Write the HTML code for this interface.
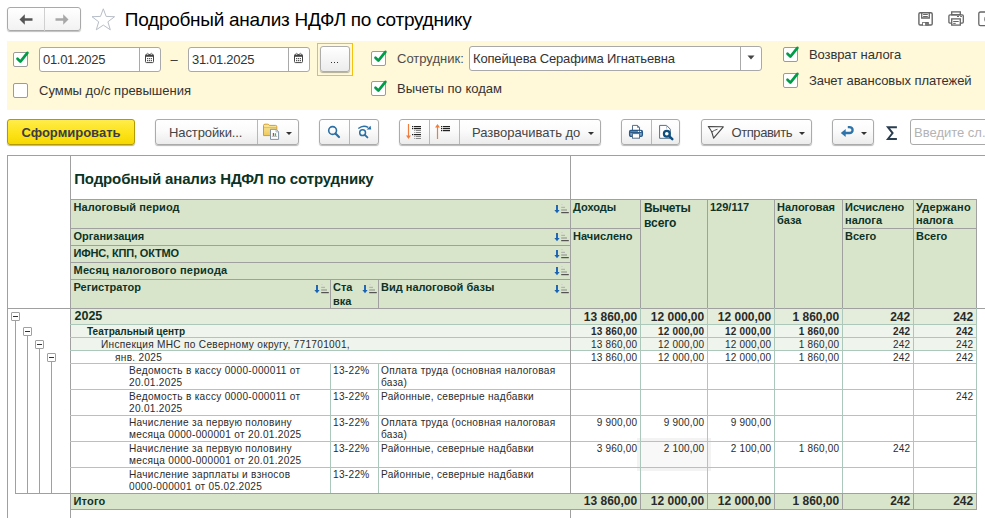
<!DOCTYPE html>
<html><head><meta charset="utf-8"><style>
html,body{margin:0;padding:0;width:985px;height:518px;overflow:hidden;background:#fff;position:relative}
body>div,body>span,body>svg{position:absolute}
.t{white-space:nowrap;font-family:"Liberation Sans",sans-serif}
</style></head><body>
<div style="left:7px;top:7px;width:74px;height:24px;border:1px solid #a9a9a9;border-radius:3px;background:linear-gradient(#fff,#f2f2f2);box-shadow:0 1px 1px rgba(0,0,0,.25);box-sizing:border-box"></div>
<div style="left:44px;top:8px;width:1px;height:23px;background:#d0d0d0"></div>
<svg style="left:18px;top:12px" width="16" height="14" viewBox="0 0 16 14"><path d="M1.5 7.5 L6.8 2.2 L6.8 6.2 L14.5 6.2 L14.5 8.8 L6.8 8.8 L6.8 12.8 Z" fill="#555"/></svg>
<svg style="left:54px;top:12px" width="16" height="14" viewBox="0 0 16 14"><path d="M14.5 7.5 L9.2 2.2 L9.2 6.2 L1.5 6.2 L1.5 8.8 L9.2 8.8 L9.2 12.8 Z" fill="#a8a8a8"/></svg>
<svg style="left:91px;top:8px" width="25" height="23" viewBox="0 0 25 23"><path d="M12.3 0.8 L15.1 8.4 L23.6 8.7 L16.9 13.8 L19.3 21.8 L12.3 17.1 L5.3 21.8 L7.7 13.8 L1 8.7 L9.5 8.4 Z" fill="none" stroke="#b8bec6" stroke-width="1"/></svg>
<span class="t" style="left:124.8px;top:9.92px;font-size:19px;line-height:19px;font-weight:400;color:#000;letter-spacing:-0.27px;">Подробный анализ НДФЛ по сотруднику</span>
<svg style="left:917px;top:11px" width="17" height="16" viewBox="0 0 17 16"><path d="M3.2 1.7 H13.9 Q15.2 1.7 15.2 3 V12.7 Q15.2 14 13.9 14 H3.2 Q1.9 14 1.9 12.7 V3 Q1.9 1.7 3.2 1.7 Z" fill="none" stroke="#666" stroke-width="1.4"/><path d="M4.7 1.7 V7 H12.3 V1.7" fill="none" stroke="#666" stroke-width="1.3"/><rect x="6.1" y="3" width="4.7" height="1" fill="#666"/><rect x="6.1" y="5" width="4.7" height="1" fill="#666"/><rect x="5.2" y="11" width="6.6" height="3.4" fill="#666"/><rect x="6" y="11.8" width="2.3" height="2.6" fill="#fff"/><rect x="8.3" y="11.8" width="3.2" height="2.6" fill="#777"/></svg>
<svg style="left:947px;top:10px" width="18" height="17" viewBox="0 0 18 17"><rect x="4.7" y="1.9" width="8.6" height="2.9" fill="none" stroke="#666" stroke-width="1.3"/><path d="M4.5 13.1 H3 Q1.9 13.1 1.9 12 V6 Q1.9 4.8 3.1 4.8 H15.2 Q16.3 4.8 16.3 6 V12 Q16.3 13.1 15.2 13.1 H13.5" fill="none" stroke="#666" stroke-width="1.3"/><rect x="4.7" y="8.9" width="8.6" height="6.2" fill="#fff" stroke="#666" stroke-width="1.3"/><rect x="6.2" y="11" width="5.5" height="1" fill="#666"/><rect x="6.2" y="12.9" width="2.5" height="1" fill="#666"/><rect x="10" y="6" width="2" height="1" fill="#666"/><rect x="13.2" y="6" width="1.7" height="1" fill="#666"/></svg>
<svg style="left:977px;top:11px" width="10" height="16" viewBox="0 0 10 16"><path d="M12 1 H3.5 Q1.8 1 1.8 2.7 V13 Q1.8 14.6 3.5 14.6 H12" fill="none" stroke="#666" stroke-width="1.3"/><ellipse cx="8.6" cy="8.2" rx="1.4" ry="2.6" fill="#777"/></svg>
<div style="left:7px;top:41px;width:978px;height:69px;background:#fff8d9"></div>
<div style="left:13px;top:52px;width:15px;height:15px;border:1px solid #9b9b9b;border-radius:2px;background:#fff;box-sizing:border-box"></div>
<svg style="left:13px;top:46px" width="18" height="22" viewBox="0 0 18 22"><path d="M4.5 12.7 L7.4 15.6 L14.4 6.9" fill="none" stroke="#009c48" stroke-width="2.7" stroke-linecap="round" stroke-linejoin="round"/></svg>
<div style="left:39px;top:47px;width:122px;height:25px;border:1px solid #a9a9a9;border-radius:3px;background:#fff;box-sizing:border-box"></div>
<div style="left:139px;top:48px;width:1px;height:23px;background:#a9a9a9"></div>
<svg style="left:144px;top:52px" width="12" height="12" viewBox="0 0 12 12"><rect x="1.5" y="2.6" width="8" height="8" rx="1" fill="#fff" stroke="#444" stroke-width="1"/><rect x="1.5" y="2.6" width="8" height="2.2" fill="#444"/><g fill="#fff" stroke="#444" stroke-width="0.6"><circle cx="3.6" cy="2.2" r="0.9"/><circle cx="7.4" cy="2.2" r="0.9"/></g><g fill="#555"><rect x="3" y="6" width="1.2" height="1.2"/><rect x="4.9" y="6" width="1.2" height="1.2"/><rect x="6.8" y="6" width="1.2" height="1.2"/><rect x="3" y="8" width="1.2" height="1.2"/><rect x="4.9" y="8" width="1.2" height="1.2"/><rect x="6.8" y="8" width="1.2" height="1.2"/></g></svg>
<span class="t" style="left:43px;top:52.60px;font-size:13px;line-height:13px;font-weight:400;color:#333;letter-spacing:-0.3px;">01.01.2025</span>
<span class="t" style="left:170.5px;top:52.50px;font-size:13px;line-height:13px;font-weight:400;color:#333;letter-spacing:0px;">–</span>
<div style="left:188px;top:47px;width:122px;height:25px;border:1px solid #a9a9a9;border-radius:3px;background:#fff;box-sizing:border-box"></div>
<div style="left:288px;top:48px;width:1px;height:23px;background:#a9a9a9"></div>
<svg style="left:293px;top:52px" width="12" height="12" viewBox="0 0 12 12"><rect x="1.5" y="2.6" width="8" height="8" rx="1" fill="#fff" stroke="#444" stroke-width="1"/><rect x="1.5" y="2.6" width="8" height="2.2" fill="#444"/><g fill="#fff" stroke="#444" stroke-width="0.6"><circle cx="3.6" cy="2.2" r="0.9"/><circle cx="7.4" cy="2.2" r="0.9"/></g><g fill="#555"><rect x="3" y="6" width="1.2" height="1.2"/><rect x="4.9" y="6" width="1.2" height="1.2"/><rect x="6.8" y="6" width="1.2" height="1.2"/><rect x="3" y="8" width="1.2" height="1.2"/><rect x="4.9" y="8" width="1.2" height="1.2"/><rect x="6.8" y="8" width="1.2" height="1.2"/></g></svg>
<span class="t" style="left:192px;top:52.60px;font-size:13px;line-height:13px;font-weight:400;color:#333;letter-spacing:-0.3px;">31.01.2025</span>
<div style="left:317px;top:43px;width:36px;height:33px;border:1px solid #f5c010;box-sizing:border-box"></div>
<div style="left:320px;top:46px;width:30px;height:26px;border:1px solid #adadad;border-radius:3px;background:linear-gradient(#fff,#ececec);box-shadow:0 1px 1px rgba(0,0,0,.3);box-sizing:border-box"></div>
<div style="left:330.6px;top:61.6px;width:1.6px;height:1.6px;background:#333"></div>
<div style="left:333.7px;top:61.6px;width:1.6px;height:1.6px;background:#333"></div>
<div style="left:336.8px;top:61.6px;width:1.6px;height:1.6px;background:#333"></div>
<div style="left:371px;top:51px;width:15px;height:15px;border:1px solid #9b9b9b;border-radius:2px;background:#fff;box-sizing:border-box"></div>
<svg style="left:371px;top:45px" width="18" height="22" viewBox="0 0 18 22"><path d="M4.5 12.7 L7.4 15.6 L14.4 6.9" fill="none" stroke="#009c48" stroke-width="2.7" stroke-linecap="round" stroke-linejoin="round"/></svg>
<span class="t" style="left:397px;top:51.70px;font-size:13px;line-height:13px;font-weight:400;color:#4d4d4d;letter-spacing:0px;">Сотрудник:</span>
<div style="left:469px;top:46px;width:293px;height:25px;border:1px solid #a9a9a9;border-radius:3px;background:#fff;box-sizing:border-box"></div>
<div style="left:740px;top:47px;width:1px;height:23px;background:#a9a9a9"></div>
<svg style="left:747px;top:55px" width="8" height="5" viewBox="0 0 8 5"><path d="M0.5 0.5 H7.5 L4 4.5 Z" fill="#444"/></svg>
<span class="t" style="left:473px;top:52.00px;font-size:13px;line-height:13px;font-weight:400;color:#333;letter-spacing:-0.17px;">Копейцева Серафима Игнатьевна</span>
<div style="left:783px;top:47px;width:15px;height:15px;border:1px solid #9b9b9b;border-radius:2px;background:#fff;box-sizing:border-box"></div>
<svg style="left:783px;top:41px" width="18" height="22" viewBox="0 0 18 22"><path d="M4.5 12.7 L7.4 15.6 L14.4 6.9" fill="none" stroke="#009c48" stroke-width="2.7" stroke-linecap="round" stroke-linejoin="round"/></svg>
<span class="t" style="left:809px;top:47.80px;font-size:13px;line-height:13px;font-weight:400;color:#333;letter-spacing:-0.1px;">Возврат налога</span>
<div style="left:783px;top:73px;width:15px;height:15px;border:1px solid #9b9b9b;border-radius:2px;background:#fff;box-sizing:border-box"></div>
<svg style="left:783px;top:67px" width="18" height="22" viewBox="0 0 18 22"><path d="M4.5 12.7 L7.4 15.6 L14.4 6.9" fill="none" stroke="#009c48" stroke-width="2.7" stroke-linecap="round" stroke-linejoin="round"/></svg>
<span class="t" style="left:809px;top:73.60px;font-size:13px;line-height:13px;font-weight:400;color:#333;letter-spacing:-0.07px;">Зачет авансовых платежей</span>
<div style="left:13px;top:83px;width:15px;height:15px;border:1px solid #9b9b9b;border-radius:2px;background:#fff;box-sizing:border-box"></div>
<span class="t" style="left:39px;top:83.90px;font-size:13px;line-height:13px;font-weight:400;color:#333;letter-spacing:0px;">Суммы до/с превышения</span>
<div style="left:371px;top:81px;width:15px;height:15px;border:1px solid #9b9b9b;border-radius:2px;background:#fff;box-sizing:border-box"></div>
<svg style="left:371px;top:75px" width="18" height="22" viewBox="0 0 18 22"><path d="M4.5 12.7 L7.4 15.6 L14.4 6.9" fill="none" stroke="#009c48" stroke-width="2.7" stroke-linecap="round" stroke-linejoin="round"/></svg>
<span class="t" style="left:397px;top:81.50px;font-size:13px;line-height:13px;font-weight:400;color:#333;letter-spacing:0px;">Вычеты по кодам</span>
<div style="left:7px;top:119px;width:128px;height:26px;border:1px solid #b29a00;border-radius:3px;background:linear-gradient(#ffec4a 0%,#fde41c 50%,#f6d800 100%);box-shadow:0 1px 1px rgba(0,0,0,.3);box-sizing:border-box"></div>
<span class="t" style="left:21.5px;top:125.70px;font-size:13px;line-height:13px;font-weight:700;color:#393c46;letter-spacing:0px;">Сформировать</span>
<div style="left:155px;top:119px;width:144px;height:26px;border:1px solid #ababab;border-radius:3px;background:linear-gradient(#ffffff 0%,#fbfbfb 45%,#ececec 100%);box-shadow:0 1px 1px rgba(0,0,0,.28);box-sizing:border-box"></div>
<div style="left:257px;top:120px;width:1px;height:24px;background:#b8b8b8"></div>
<span class="t" style="left:169px;top:125.70px;font-size:13px;line-height:13px;font-weight:400;color:#444;letter-spacing:-0.1px;">Настройки...</span>
<svg style="left:262px;top:122px" width="20" height="20" viewBox="0 0 20 20"><defs><linearGradient id="fg" x1="0" y1="0" x2="0" y2="1"><stop offset="0" stop-color="#fbe9a0"/><stop offset="1" stop-color="#efc95a"/></linearGradient></defs><path d="M1.5 3.5 Q1.5 2.2 3 2.2 H5.8 Q6.8 2.2 7.3 3.4 H13.6 Q14.8 3.4 14.8 4.6 V13.6 H1.5 Z" fill="url(#fg)" stroke="#d29d32" stroke-width="1"/><path d="M2 5.6 H14.3" stroke="#e2b547" stroke-width="0.8"/><path d="M8.5 7.3 H14 L16.6 9.9 V17.4 H8.5 Z" fill="#fff" stroke="#7f93a5" stroke-width="1"/><path d="M14 7.3 V9.9 H16.6" fill="none" stroke="#9aaab8" stroke-width="0.8"/><rect x="10.8" y="11" width="1.2" height="2.9" fill="#e8332a"/><rect x="12.7" y="11.3" width="1.4" height="2.6" fill="#39b54a"/><path d="M9.8 14.4 H15.2" stroke="#9a9a9a" stroke-width=".7"/></svg>
<svg style="left:286px;top:132px" width="6" height="3" viewBox="0 0 6 3"><path d="M0 0 H6 L3 3 Z" fill="#333"/></svg>
<div style="left:319px;top:119px;width:60px;height:26px;border:1px solid #ababab;border-radius:3px;background:linear-gradient(#ffffff 0%,#fbfbfb 45%,#ececec 100%);box-shadow:0 1px 1px rgba(0,0,0,.28);box-sizing:border-box"></div>
<div style="left:349px;top:120px;width:1px;height:24px;background:#b8b8b8"></div>
<svg style="left:326px;top:124px" width="16" height="16" viewBox="0 0 16 16"><circle cx="6.6" cy="6.5" r="3.9" fill="none" stroke="#2c6fa5" stroke-width="1.6"/><path d="M9.5 9.5 L13 13" stroke="#2c6fa5" stroke-width="2.2" stroke-linecap="round"/></svg>
<svg style="left:355px;top:124px" width="18" height="16" viewBox="0 0 18 16"><circle cx="7.6" cy="8.7" r="2.9" fill="none" stroke="#2c6fa5" stroke-width="1.5"/><path d="M9.8 10.9 L12.4 13.4" stroke="#2c6fa5" stroke-width="1.9" stroke-linecap="round"/><path d="M3.3 4.6 Q8 0.6 13.2 3.4" fill="none" stroke="#2c6fa5" stroke-width="1.3"/><path d="M11.6 5.6 L16.2 5.6 L15.6 1.8 Z" fill="#2c6fa5"/></svg>
<div style="left:399px;top:119px;width:202px;height:26px;border:1px solid #ababab;border-radius:3px;background:linear-gradient(#ffffff 0%,#fbfbfb 45%,#ececec 100%);box-shadow:0 1px 1px rgba(0,0,0,.28);box-sizing:border-box"></div>
<div style="left:429px;top:120px;width:1px;height:24px;background:#b8b8b8"></div>
<div style="left:459px;top:120px;width:1px;height:24px;background:#b8b8b8"></div>
<svg style="left:404px;top:122px" width="20" height="20" viewBox="0 0 20 20"><path d="M4.5 2 V15" stroke="#f07d3c" stroke-width="1.2"/><path d="M2 13.5 H7 L4.5 17 Z" fill="#f07d3c"/><g fill="#222"><rect x="8" y="4" width="1.3" height="1.2"/><rect x="8" y="6" width="1.3" height="1.2"/><rect x="8" y="12" width="1.3" height="1.2"/><rect x="10" y="4" width="7" height="1.2"/><rect x="10" y="6" width="7" height="1.2"/><rect x="10" y="12" width="7" height="1.2"/></g><g fill="#888"><rect x="10.3" y="8" width="1" height="1"/><rect x="10.3" y="10" width="1" height="1"/><rect x="10.3" y="14" width="1" height="1"/><rect x="10.3" y="16" width="1" height="1"/><rect x="12" y="8" width="5" height="1"/><rect x="12" y="10" width="5" height="1"/><rect x="12" y="14" width="5" height="1"/><rect x="12" y="16" width="5" height="1"/></g></svg>
<svg style="left:433px;top:122px" width="20" height="20" viewBox="0 0 20 20"><path d="M4.5 5 V17" stroke="#f07d3c" stroke-width="1.2"/><path d="M2 5.5 H7 L4.5 2 Z" fill="#f07d3c"/><g fill="#222"><rect x="8" y="4" width="1.3" height="1.2"/><rect x="8" y="6" width="1.3" height="1.2"/><rect x="8" y="8" width="1.3" height="1.2"/><rect x="10" y="4" width="7" height="1.2"/><rect x="10" y="6" width="7" height="1.2"/><rect x="10" y="8" width="7" height="1.2"/></g></svg>
<span class="t" style="left:472px;top:125.70px;font-size:13px;line-height:13px;font-weight:400;color:#444;letter-spacing:0px;">Разворачивать до</span>
<svg style="left:588px;top:132px" width="6" height="3" viewBox="0 0 6 3"><path d="M0 0 H6 L3 3 Z" fill="#333"/></svg>
<div style="left:621px;top:119px;width:59px;height:26px;border:1px solid #ababab;border-radius:3px;background:linear-gradient(#ffffff 0%,#fbfbfb 45%,#ececec 100%);box-shadow:0 1px 1px rgba(0,0,0,.28);box-sizing:border-box"></div>
<div style="left:651px;top:120px;width:1px;height:24px;background:#b8b8b8"></div>
<svg style="left:628px;top:124px" width="17" height="16" viewBox="0 0 17 16"><path d="M4.5 1.4 H9.5 L11.5 3.4 V6.5 H4.5 Z" fill="#fff" stroke="#566f88" stroke-width="1"/><path d="M9.5 1.4 V3.4 H11.5" fill="none" stroke="#566f88" stroke-width="0.8"/><rect x="1.6" y="6.5" width="12.8" height="5.8" rx="1.3" fill="#7aa3ca" stroke="#27588a" stroke-width="1.3"/><rect x="2.2" y="7.8" width="11.6" height="1.2" fill="#2d5b88"/><circle cx="10.5" cy="7.4" r="0.6" fill="#fff"/><circle cx="12.5" cy="7.4" r="0.6" fill="#fff"/><rect x="4.5" y="9.6" width="7" height="4.6" fill="#fff" stroke="#566f88" stroke-width="1"/></svg>
<svg style="left:657px;top:124px" width="18" height="17" viewBox="0 0 18 17"><path d="M2.6 1.4 H9.6 L13.3 5.2 V14.3 H2.6 Z" fill="#fff" stroke="#566f88" stroke-width="1"/><path d="M9.6 1.6 V4.6" stroke="#9ab" stroke-width="0.8"/><circle cx="9.8" cy="9.8" r="2.9" fill="#fff" stroke="#0f4f80" stroke-width="2.2"/><path d="M12.4 12.4 L15.3 15.1" stroke="#0f4f80" stroke-width="2.5" stroke-linecap="round"/></svg>
<div style="left:701px;top:119px;width:111px;height:26px;border:1px solid #ababab;border-radius:3px;background:linear-gradient(#ffffff 0%,#fbfbfb 45%,#ececec 100%);box-shadow:0 1px 1px rgba(0,0,0,.28);box-sizing:border-box"></div>
<svg style="left:706px;top:124px" width="20" height="16" viewBox="0 0 20 16"><path d="M2.3 2.5 L17.3 2.8 L7.6 14.2 L5.8 8 Q4.6 5.6 2.3 2.5 Z" fill="none" stroke="#444" stroke-width="1.1" stroke-linejoin="round"/><path d="M5.8 8 Q8.2 6.2 11.5 5.2" fill="none" stroke="#444" stroke-width="0.9"/></svg>
<span class="t" style="left:731.6px;top:125.70px;font-size:13px;line-height:13px;font-weight:400;color:#444;letter-spacing:-0.45px;">Отправить</span>
<svg style="left:799px;top:132px" width="6" height="3" viewBox="0 0 6 3"><path d="M0 0 H6 L3 3 Z" fill="#333"/></svg>
<div style="left:832px;top:119px;width:42px;height:26px;border:1px solid #ababab;border-radius:3px;background:linear-gradient(#ffffff 0%,#fbfbfb 45%,#ececec 100%);box-shadow:0 1px 1px rgba(0,0,0,.28);box-sizing:border-box"></div>
<svg style="left:839px;top:124px" width="16" height="15" viewBox="0 0 16 15"><path d="M5.5 9 H10.3 Q13.6 9 13.6 6 Q13.6 3.1 10.3 3.1 H8.8" fill="none" stroke="#2e74aa" stroke-width="2.3"/><path d="M1.8 9 L6.7 5.1 V12.9 Z" fill="#2e74aa"/></svg>
<svg style="left:861px;top:132px" width="6" height="3" viewBox="0 0 6 3"><path d="M0 0 H6 L3 3 Z" fill="#333"/></svg>
<svg style="left:885px;top:125px" width="13" height="16" viewBox="0 0 13 16"><path d="M11.9 2.2 H2.9 L7.6 8.1 L2.9 14 H11.9" fill="none" stroke="#2a3e50" stroke-width="1.9"/></svg>
<div style="left:910px;top:119px;width:80px;height:26px;border:1px solid #a9a9a9;border-radius:3px;background:#fff;box-sizing:border-box"></div>
<span class="t" style="left:914px;top:125.70px;font-size:13px;line-height:13px;font-weight:400;color:#b3b3b3;letter-spacing:0px;">Введите сл...</span>
<div style="left:7px;top:155px;width:978px;height:1px;background:#a0a0a0"></div>
<div style="left:7px;top:155px;width:1px;height:363px;background:#a0a0a0"></div>
<div style="left:70px;top:155px;width:1px;height:363px;background:#a0a0a0"></div>
<div style="left:570px;top:155px;width:1px;height:44px;background:#a0a0a0"></div>
<span class="t" style="left:74.2px;top:170.60px;font-size:15px;line-height:15px;font-weight:700;color:#0a3326;letter-spacing:-0.13px;">Подробный анализ НДФЛ по сотруднику</span>
<div style="left:71px;top:200px;width:906px;height:108px;background:#d9e5cb"></div>
<div style="left:70px;top:199px;width:907px;height:1px;background:#a0a0a0"></div>
<div style="left:7px;top:308px;width:978px;height:1px;background:#a0a0a0"></div>
<div style="left:976px;top:199px;width:1px;height:109px;background:#a0a0a0"></div>
<div style="left:570px;top:199px;width:1px;height:109px;background:#a0a0a0"></div>
<div style="left:640px;top:199px;width:1px;height:109px;background:#a0a0a0"></div>
<div style="left:707px;top:199px;width:1px;height:109px;background:#a0a0a0"></div>
<div style="left:774px;top:199px;width:1px;height:109px;background:#a0a0a0"></div>
<div style="left:842px;top:199px;width:1px;height:109px;background:#a0a0a0"></div>
<div style="left:913px;top:199px;width:1px;height:109px;background:#a0a0a0"></div>
<div style="left:70px;top:228px;width:500px;height:1px;background:#a0a0a0"></div>
<div style="left:570px;top:228px;width:70px;height:1px;background:#a0a0a0"></div>
<div style="left:842px;top:228px;width:134px;height:1px;background:#a0a0a0"></div>
<div style="left:70px;top:245px;width:500px;height:1px;background:#a0a0a0"></div>
<div style="left:70px;top:262px;width:500px;height:1px;background:#a0a0a0"></div>
<div style="left:70px;top:279px;width:500px;height:1px;background:#a0a0a0"></div>
<div style="left:330px;top:279px;width:1px;height:29px;background:#a0a0a0"></div>
<div style="left:378px;top:279px;width:1px;height:29px;background:#a0a0a0"></div>
<span class="t" style="left:73.5px;top:202.19px;font-size:11px;line-height:11px;font-weight:700;color:#0d3328;letter-spacing:0.1px;">Налоговый период</span>
<svg style="left:554px;top:204px" width="16" height="11" viewBox="0 0 16 11"><path d="M3 1 V6.5" stroke="#1863b5" stroke-width="1.9"/><path d="M0.4 5.9 H5.6 L3 9.3 Z" fill="#1863b5"/><rect x="7.2" y="0.2" width="1.6" height="0.9" fill="#ccc"/><rect x="7.2" y="2.8" width="3.8" height="1" fill="#aaa"/><rect x="7.2" y="5.5" width="5.8" height="1" fill="#8a8a8a"/><rect x="7.2" y="8.1" width="7.6" height="1.1" fill="#444"/></svg>
<span class="t" style="left:73.5px;top:230.69px;font-size:11px;line-height:11px;font-weight:700;color:#0d3328;letter-spacing:0px;">Организация</span>
<svg style="left:554px;top:232px" width="16" height="11" viewBox="0 0 16 11"><path d="M3 1 V6.5" stroke="#1863b5" stroke-width="1.9"/><path d="M0.4 5.9 H5.6 L3 9.3 Z" fill="#1863b5"/><rect x="7.2" y="0.2" width="1.6" height="0.9" fill="#ccc"/><rect x="7.2" y="2.8" width="3.8" height="1" fill="#aaa"/><rect x="7.2" y="5.5" width="5.8" height="1" fill="#8a8a8a"/><rect x="7.2" y="8.1" width="7.6" height="1.1" fill="#444"/></svg>
<span class="t" style="left:73.5px;top:247.69px;font-size:11px;line-height:11px;font-weight:700;color:#0d3328;letter-spacing:-0.15px;">ИФНС, КПП, ОКТМО</span>
<svg style="left:554px;top:249px" width="16" height="11" viewBox="0 0 16 11"><path d="M3 1 V6.5" stroke="#1863b5" stroke-width="1.9"/><path d="M0.4 5.9 H5.6 L3 9.3 Z" fill="#1863b5"/><rect x="7.2" y="0.2" width="1.6" height="0.9" fill="#ccc"/><rect x="7.2" y="2.8" width="3.8" height="1" fill="#aaa"/><rect x="7.2" y="5.5" width="5.8" height="1" fill="#8a8a8a"/><rect x="7.2" y="8.1" width="7.6" height="1.1" fill="#444"/></svg>
<span class="t" style="left:73.5px;top:264.69px;font-size:11px;line-height:11px;font-weight:700;color:#0d3328;letter-spacing:0.23px;">Месяц налогового периода</span>
<svg style="left:554px;top:266px" width="16" height="11" viewBox="0 0 16 11"><path d="M3 1 V6.5" stroke="#1863b5" stroke-width="1.9"/><path d="M0.4 5.9 H5.6 L3 9.3 Z" fill="#1863b5"/><rect x="7.2" y="0.2" width="1.6" height="0.9" fill="#ccc"/><rect x="7.2" y="2.8" width="3.8" height="1" fill="#aaa"/><rect x="7.2" y="5.5" width="5.8" height="1" fill="#8a8a8a"/><rect x="7.2" y="8.1" width="7.6" height="1.1" fill="#444"/></svg>
<span class="t" style="left:73.5px;top:281.69px;font-size:11px;line-height:11px;font-weight:700;color:#0d3328;letter-spacing:0px;">Регистратор</span>
<svg style="left:314px;top:284px" width="16" height="11" viewBox="0 0 16 11"><path d="M3 1 V6.5" stroke="#1863b5" stroke-width="1.9"/><path d="M0.4 5.9 H5.6 L3 9.3 Z" fill="#1863b5"/><rect x="7.2" y="0.2" width="1.6" height="0.9" fill="#ccc"/><rect x="7.2" y="2.8" width="3.8" height="1" fill="#aaa"/><rect x="7.2" y="5.5" width="5.8" height="1" fill="#8a8a8a"/><rect x="7.2" y="8.1" width="7.6" height="1.1" fill="#444"/></svg>
<span class="t" style="left:333px;top:281.69px;font-size:11px;line-height:11px;font-weight:700;color:#0d3328;letter-spacing:0px;">Ста</span>
<span class="t" style="left:333px;top:295.69px;font-size:11px;line-height:11px;font-weight:700;color:#0d3328;letter-spacing:0px;">вка</span>
<svg style="left:362px;top:284px" width="16" height="11" viewBox="0 0 16 11"><path d="M3 1 V6.5" stroke="#1863b5" stroke-width="1.9"/><path d="M0.4 5.9 H5.6 L3 9.3 Z" fill="#1863b5"/><rect x="7.2" y="0.2" width="1.6" height="0.9" fill="#ccc"/><rect x="7.2" y="2.8" width="3.8" height="1" fill="#aaa"/><rect x="7.2" y="5.5" width="5.8" height="1" fill="#8a8a8a"/><rect x="7.2" y="8.1" width="7.6" height="1.1" fill="#444"/></svg>
<span class="t" style="left:381px;top:281.69px;font-size:11px;line-height:11px;font-weight:700;color:#0d3328;letter-spacing:0px;">Вид налоговой базы</span>
<svg style="left:554px;top:284px" width="16" height="11" viewBox="0 0 16 11"><path d="M3 1 V6.5" stroke="#1863b5" stroke-width="1.9"/><path d="M0.4 5.9 H5.6 L3 9.3 Z" fill="#1863b5"/><rect x="7.2" y="0.2" width="1.6" height="0.9" fill="#ccc"/><rect x="7.2" y="2.8" width="3.8" height="1" fill="#aaa"/><rect x="7.2" y="5.5" width="5.8" height="1" fill="#8a8a8a"/><rect x="7.2" y="8.1" width="7.6" height="1.1" fill="#444"/></svg>
<span class="t" style="left:573px;top:202.29px;font-size:11px;line-height:11px;font-weight:700;color:#0d3328;letter-spacing:0px;">Доходы</span>
<span class="t" style="left:573px;top:230.69px;font-size:11px;line-height:11px;font-weight:700;color:#0d3328;letter-spacing:0px;">Начислено</span>
<span class="t" style="left:644px;top:201.64px;font-size:12px;line-height:12px;font-weight:700;color:#0d3328;letter-spacing:-0.35px;">Вычеты</span>
<span class="t" style="left:644px;top:216.74px;font-size:12px;line-height:12px;font-weight:700;color:#0d3328;letter-spacing:-0.05px;">всего</span>
<span class="t" style="left:710px;top:202.39px;font-size:11px;line-height:11px;font-weight:700;color:#0d3328;letter-spacing:0px;">129/117</span>
<span class="t" style="left:777px;top:202.39px;font-size:11px;line-height:11px;font-weight:700;color:#0d3328;letter-spacing:0px;">Налоговая</span>
<span class="t" style="left:777px;top:215.39px;font-size:11px;line-height:11px;font-weight:700;color:#0d3328;letter-spacing:0px;">база</span>
<span class="t" style="left:845px;top:202.39px;font-size:11px;line-height:11px;font-weight:700;color:#0d3328;letter-spacing:0px;">Исчислено</span>
<span class="t" style="left:845px;top:215.39px;font-size:11px;line-height:11px;font-weight:700;color:#0d3328;letter-spacing:0px;">налога</span>
<span class="t" style="left:845px;top:230.69px;font-size:11px;line-height:11px;font-weight:700;color:#0d3328;letter-spacing:0px;">Всего</span>
<span class="t" style="left:916px;top:202.39px;font-size:11px;line-height:11px;font-weight:700;color:#0d3328;letter-spacing:0.2px;">Удержано</span>
<span class="t" style="left:916px;top:215.39px;font-size:11px;line-height:11px;font-weight:700;color:#0d3328;letter-spacing:0px;">налога</span>
<span class="t" style="left:916px;top:230.69px;font-size:11px;line-height:11px;font-weight:700;color:#0d3328;letter-spacing:0px;">Всего</span>
<div style="left:637px;top:438px;width:74px;height:33px;background:rgba(0,0,0,0.028);border:3px solid rgba(0,0,0,0.018);box-sizing:border-box"></div>
<div style="left:71px;top:309px;width:906px;height:15px;background:#e4eddb"></div>
<div style="left:71px;top:325px;width:906px;height:25px;background:#eff4ec"></div>
<div style="left:70px;top:324px;width:907px;height:1px;background:#abc8bb"></div>
<div style="left:70px;top:337px;width:907px;height:1px;background:#abc8bb"></div>
<div style="left:70px;top:350px;width:907px;height:1px;background:#abc8bb"></div>
<div style="left:70px;top:363px;width:907px;height:1px;background:#abc8bb"></div>
<div style="left:70px;top:389px;width:907px;height:1px;background:#abc8bb"></div>
<div style="left:70px;top:415px;width:907px;height:1px;background:#abc8bb"></div>
<div style="left:70px;top:441px;width:907px;height:1px;background:#abc8bb"></div>
<div style="left:70px;top:467px;width:907px;height:1px;background:#abc8bb"></div>
<div style="left:640px;top:308px;width:1px;height:185px;background:#abc8bb"></div>
<div style="left:707px;top:308px;width:1px;height:185px;background:#abc8bb"></div>
<div style="left:774px;top:308px;width:1px;height:185px;background:#abc8bb"></div>
<div style="left:842px;top:308px;width:1px;height:185px;background:#abc8bb"></div>
<div style="left:913px;top:308px;width:1px;height:185px;background:#abc8bb"></div>
<div style="left:976px;top:308px;width:1px;height:185px;background:#abc8bb"></div>
<div style="left:570px;top:308px;width:1px;height:210px;background:#a0a0a0"></div>
<div style="left:330px;top:363px;width:1px;height:130px;background:#abc8bb"></div>
<div style="left:378px;top:363px;width:1px;height:130px;background:#abc8bb"></div>
<div style="left:71px;top:494px;width:906px;height:15px;background:#d9e5cb"></div>
<div style="left:15px;top:493px;width:962px;height:1px;background:#a0a0a0"></div>
<div style="left:70px;top:509px;width:907px;height:1px;background:#a0a0a0"></div>
<div style="left:640px;top:493px;width:1px;height:17px;background:#a0a0a0"></div>
<div style="left:707px;top:493px;width:1px;height:17px;background:#a0a0a0"></div>
<div style="left:774px;top:493px;width:1px;height:17px;background:#a0a0a0"></div>
<div style="left:842px;top:493px;width:1px;height:17px;background:#a0a0a0"></div>
<div style="left:913px;top:493px;width:1px;height:17px;background:#a0a0a0"></div>
<div style="left:976px;top:493px;width:1px;height:17px;background:#a0a0a0"></div>
<div style="left:15px;top:321px;width:1px;height:172px;background:#a0a0a0"></div>
<div style="left:11px;top:312px;width:9px;height:9px;border:1px solid #a0a0a0;border-radius:1px;background:#fff;box-sizing:border-box"></div>
<div style="left:13px;top:316px;width:5px;height:1px;background:#333"></div>
<div style="left:27px;top:336px;width:1px;height:157px;background:#a0a0a0"></div>
<div style="left:23px;top:327px;width:9px;height:9px;border:1px solid #a0a0a0;border-radius:1px;background:#fff;box-sizing:border-box"></div>
<div style="left:25px;top:331px;width:5px;height:1px;background:#333"></div>
<div style="left:39px;top:349px;width:1px;height:144px;background:#a0a0a0"></div>
<div style="left:35px;top:340px;width:9px;height:9px;border:1px solid #a0a0a0;border-radius:1px;background:#fff;box-sizing:border-box"></div>
<div style="left:37px;top:344px;width:5px;height:1px;background:#333"></div>
<div style="left:51px;top:362px;width:1px;height:131px;background:#a0a0a0"></div>
<div style="left:47px;top:353px;width:9px;height:9px;border:1px solid #a0a0a0;border-radius:1px;background:#fff;box-sizing:border-box"></div>
<div style="left:49px;top:357px;width:5px;height:1px;background:#333"></div>
<span class="t" style="left:74.5px;top:310.12px;font-size:12.5px;line-height:12.5px;font-weight:700;color:#0d3328;letter-spacing:0px;">2025</span>
<span class="t" style="left:237.20000000000005px;width:400px;text-align:right;top:310.64px;font-size:12px;line-height:12px;font-weight:700;color:#2a2a2a;letter-spacing:0px;">13 860,00</span>
<span class="t" style="left:304.20000000000005px;width:400px;text-align:right;top:310.64px;font-size:12px;line-height:12px;font-weight:700;color:#2a2a2a;letter-spacing:0px;">12 000,00</span>
<span class="t" style="left:371.20000000000005px;width:400px;text-align:right;top:310.64px;font-size:12px;line-height:12px;font-weight:700;color:#2a2a2a;letter-spacing:0px;">12 000,00</span>
<span class="t" style="left:439.20000000000005px;width:400px;text-align:right;top:310.64px;font-size:12px;line-height:12px;font-weight:700;color:#2a2a2a;letter-spacing:0px;">1 860,00</span>
<span class="t" style="left:510.20000000000005px;width:400px;text-align:right;top:310.64px;font-size:12px;line-height:12px;font-weight:700;color:#2a2a2a;letter-spacing:0px;">242</span>
<span class="t" style="left:573.2px;width:400px;text-align:right;top:310.64px;font-size:12px;line-height:12px;font-weight:700;color:#2a2a2a;letter-spacing:0px;">242</span>
<span class="t" style="left:87px;top:327.04px;font-size:10px;line-height:10px;font-weight:700;color:#0d3328;letter-spacing:0px;">Театральный центр</span>
<span class="t" style="left:237.20000000000005px;width:400px;text-align:right;top:327.04px;font-size:10px;line-height:10px;font-weight:700;color:#2a2a2a;letter-spacing:0.2px;">13 860,00</span>
<span class="t" style="left:304.20000000000005px;width:400px;text-align:right;top:327.04px;font-size:10px;line-height:10px;font-weight:700;color:#2a2a2a;letter-spacing:0.2px;">12 000,00</span>
<span class="t" style="left:371.20000000000005px;width:400px;text-align:right;top:327.04px;font-size:10px;line-height:10px;font-weight:700;color:#2a2a2a;letter-spacing:0.2px;">12 000,00</span>
<span class="t" style="left:439.20000000000005px;width:400px;text-align:right;top:327.04px;font-size:10px;line-height:10px;font-weight:700;color:#2a2a2a;letter-spacing:0.2px;">1 860,00</span>
<span class="t" style="left:510.20000000000005px;width:400px;text-align:right;top:327.04px;font-size:10px;line-height:10px;font-weight:700;color:#2a2a2a;letter-spacing:0.2px;">242</span>
<span class="t" style="left:573.2px;width:400px;text-align:right;top:327.04px;font-size:10px;line-height:10px;font-weight:700;color:#2a2a2a;letter-spacing:0.2px;">242</span>
<span class="t" style="left:101px;top:339.65px;font-size:10.1px;line-height:10.1px;font-weight:400;color:#2b2b2b;letter-spacing:0.3px;">Инспекция МНС по Северному округу, 771701001,</span>
<span class="t" style="left:237.20000000000005px;width:400px;text-align:right;top:339.74px;font-size:10px;line-height:10px;font-weight:400;color:#2b2b2b;letter-spacing:0.2px;">13 860,00</span>
<span class="t" style="left:304.20000000000005px;width:400px;text-align:right;top:339.74px;font-size:10px;line-height:10px;font-weight:400;color:#2b2b2b;letter-spacing:0.2px;">12 000,00</span>
<span class="t" style="left:371.20000000000005px;width:400px;text-align:right;top:339.74px;font-size:10px;line-height:10px;font-weight:400;color:#2b2b2b;letter-spacing:0.2px;">12 000,00</span>
<span class="t" style="left:439.20000000000005px;width:400px;text-align:right;top:339.74px;font-size:10px;line-height:10px;font-weight:400;color:#2b2b2b;letter-spacing:0.2px;">1 860,00</span>
<span class="t" style="left:510.20000000000005px;width:400px;text-align:right;top:339.74px;font-size:10px;line-height:10px;font-weight:400;color:#2b2b2b;letter-spacing:0.2px;">242</span>
<span class="t" style="left:573.2px;width:400px;text-align:right;top:339.74px;font-size:10px;line-height:10px;font-weight:400;color:#2b2b2b;letter-spacing:0.2px;">242</span>
<span class="t" style="left:115px;top:352.65px;font-size:10.1px;line-height:10.1px;font-weight:400;color:#2b2b2b;letter-spacing:0.3px;">янв. 2025</span>
<span class="t" style="left:237.20000000000005px;width:400px;text-align:right;top:352.74px;font-size:10px;line-height:10px;font-weight:400;color:#2b2b2b;letter-spacing:0.2px;">13 860,00</span>
<span class="t" style="left:304.20000000000005px;width:400px;text-align:right;top:352.74px;font-size:10px;line-height:10px;font-weight:400;color:#2b2b2b;letter-spacing:0.2px;">12 000,00</span>
<span class="t" style="left:371.20000000000005px;width:400px;text-align:right;top:352.74px;font-size:10px;line-height:10px;font-weight:400;color:#2b2b2b;letter-spacing:0.2px;">12 000,00</span>
<span class="t" style="left:439.20000000000005px;width:400px;text-align:right;top:352.74px;font-size:10px;line-height:10px;font-weight:400;color:#2b2b2b;letter-spacing:0.2px;">1 860,00</span>
<span class="t" style="left:510.20000000000005px;width:400px;text-align:right;top:352.74px;font-size:10px;line-height:10px;font-weight:400;color:#2b2b2b;letter-spacing:0.2px;">242</span>
<span class="t" style="left:573.2px;width:400px;text-align:right;top:352.74px;font-size:10px;line-height:10px;font-weight:400;color:#2b2b2b;letter-spacing:0.2px;">242</span>
<span class="t" style="left:129px;top:365.75px;font-size:10.1px;line-height:10.1px;font-weight:400;color:#2b2b2b;letter-spacing:0.3px;">Ведомость в кассу 0000-000011 от</span>
<span class="t" style="left:129px;top:377.95px;font-size:10.1px;line-height:10.1px;font-weight:400;color:#2b2b2b;letter-spacing:0.3px;">20.01.2025</span>
<span class="t" style="left:333px;top:365.75px;font-size:10.1px;line-height:10.1px;font-weight:400;color:#2b2b2b;letter-spacing:0.3px;">13-22%</span>
<span class="t" style="left:381px;top:365.75px;font-size:10.1px;line-height:10.1px;font-weight:400;color:#2b2b2b;letter-spacing:0.3px;">Оплата труда (основная налоговая</span>
<span class="t" style="left:381px;top:377.95px;font-size:10.1px;line-height:10.1px;font-weight:400;color:#2b2b2b;letter-spacing:0.3px;">база)</span>
<span class="t" style="left:129px;top:391.75px;font-size:10.1px;line-height:10.1px;font-weight:400;color:#2b2b2b;letter-spacing:0.3px;">Ведомость в кассу 0000-000011 от</span>
<span class="t" style="left:129px;top:403.95px;font-size:10.1px;line-height:10.1px;font-weight:400;color:#2b2b2b;letter-spacing:0.3px;">20.01.2025</span>
<span class="t" style="left:333px;top:391.75px;font-size:10.1px;line-height:10.1px;font-weight:400;color:#2b2b2b;letter-spacing:0.3px;">13-22%</span>
<span class="t" style="left:381px;top:391.75px;font-size:10.1px;line-height:10.1px;font-weight:400;color:#2b2b2b;letter-spacing:0.3px;">Районные, северные надбавки</span>
<span class="t" style="left:573.2px;width:400px;text-align:right;top:391.84px;font-size:10px;line-height:10px;font-weight:400;color:#2b2b2b;letter-spacing:0.2px;">242</span>
<span class="t" style="left:129px;top:417.75px;font-size:10.1px;line-height:10.1px;font-weight:400;color:#2b2b2b;letter-spacing:0.3px;">Начисление за первую половину</span>
<span class="t" style="left:129px;top:429.95px;font-size:10.1px;line-height:10.1px;font-weight:400;color:#2b2b2b;letter-spacing:0.3px;">месяца 0000-000001 от 20.01.2025</span>
<span class="t" style="left:333px;top:417.75px;font-size:10.1px;line-height:10.1px;font-weight:400;color:#2b2b2b;letter-spacing:0.3px;">13-22%</span>
<span class="t" style="left:381px;top:417.75px;font-size:10.1px;line-height:10.1px;font-weight:400;color:#2b2b2b;letter-spacing:0.3px;">Оплата труда (основная налоговая</span>
<span class="t" style="left:381px;top:429.95px;font-size:10.1px;line-height:10.1px;font-weight:400;color:#2b2b2b;letter-spacing:0.3px;">база)</span>
<span class="t" style="left:237.20000000000005px;width:400px;text-align:right;top:417.84px;font-size:10px;line-height:10px;font-weight:400;color:#2b2b2b;letter-spacing:0.2px;">9 900,00</span>
<span class="t" style="left:304.20000000000005px;width:400px;text-align:right;top:417.84px;font-size:10px;line-height:10px;font-weight:400;color:#2b2b2b;letter-spacing:0.2px;">9 900,00</span>
<span class="t" style="left:371.20000000000005px;width:400px;text-align:right;top:417.84px;font-size:10px;line-height:10px;font-weight:400;color:#2b2b2b;letter-spacing:0.2px;">9 900,00</span>
<span class="t" style="left:129px;top:443.75px;font-size:10.1px;line-height:10.1px;font-weight:400;color:#2b2b2b;letter-spacing:0.3px;">Начисление за первую половину</span>
<span class="t" style="left:129px;top:455.95px;font-size:10.1px;line-height:10.1px;font-weight:400;color:#2b2b2b;letter-spacing:0.3px;">месяца 0000-000001 от 20.01.2025</span>
<span class="t" style="left:333px;top:443.75px;font-size:10.1px;line-height:10.1px;font-weight:400;color:#2b2b2b;letter-spacing:0.3px;">13-22%</span>
<span class="t" style="left:381px;top:443.75px;font-size:10.1px;line-height:10.1px;font-weight:400;color:#2b2b2b;letter-spacing:0.3px;">Районные, северные надбавки</span>
<span class="t" style="left:237.20000000000005px;width:400px;text-align:right;top:443.84px;font-size:10px;line-height:10px;font-weight:400;color:#2b2b2b;letter-spacing:0.2px;">3 960,00</span>
<span class="t" style="left:304.20000000000005px;width:400px;text-align:right;top:443.84px;font-size:10px;line-height:10px;font-weight:400;color:#2b2b2b;letter-spacing:0.2px;">2 100,00</span>
<span class="t" style="left:371.20000000000005px;width:400px;text-align:right;top:443.84px;font-size:10px;line-height:10px;font-weight:400;color:#2b2b2b;letter-spacing:0.2px;">2 100,00</span>
<span class="t" style="left:439.20000000000005px;width:400px;text-align:right;top:443.84px;font-size:10px;line-height:10px;font-weight:400;color:#2b2b2b;letter-spacing:0.2px;">1 860,00</span>
<span class="t" style="left:510.20000000000005px;width:400px;text-align:right;top:443.84px;font-size:10px;line-height:10px;font-weight:400;color:#2b2b2b;letter-spacing:0.2px;">242</span>
<span class="t" style="left:129px;top:469.75px;font-size:10.1px;line-height:10.1px;font-weight:400;color:#2b2b2b;letter-spacing:0.3px;">Начисление зарплаты и взносов</span>
<span class="t" style="left:129px;top:481.95px;font-size:10.1px;line-height:10.1px;font-weight:400;color:#2b2b2b;letter-spacing:0.3px;">0000-000001 от 05.02.2025</span>
<span class="t" style="left:333px;top:469.75px;font-size:10.1px;line-height:10.1px;font-weight:400;color:#2b2b2b;letter-spacing:0.3px;">13-22%</span>
<span class="t" style="left:381px;top:469.75px;font-size:10.1px;line-height:10.1px;font-weight:400;color:#2b2b2b;letter-spacing:0.3px;">Районные, северные надбавки</span>
<span class="t" style="left:73.5px;top:496.19px;font-size:11px;line-height:11px;font-weight:700;color:#0d3328;letter-spacing:0.2px;">Итого</span>
<span class="t" style="left:237.20000000000005px;width:400px;text-align:right;top:495.34px;font-size:12px;line-height:12px;font-weight:700;color:#2a2a2a;letter-spacing:0px;">13 860,00</span>
<span class="t" style="left:304.20000000000005px;width:400px;text-align:right;top:495.34px;font-size:12px;line-height:12px;font-weight:700;color:#2a2a2a;letter-spacing:0px;">12 000,00</span>
<span class="t" style="left:371.20000000000005px;width:400px;text-align:right;top:495.34px;font-size:12px;line-height:12px;font-weight:700;color:#2a2a2a;letter-spacing:0px;">12 000,00</span>
<span class="t" style="left:439.20000000000005px;width:400px;text-align:right;top:495.34px;font-size:12px;line-height:12px;font-weight:700;color:#2a2a2a;letter-spacing:0px;">1 860,00</span>
<span class="t" style="left:510.20000000000005px;width:400px;text-align:right;top:495.34px;font-size:12px;line-height:12px;font-weight:700;color:#2a2a2a;letter-spacing:0px;">242</span>
<span class="t" style="left:573.2px;width:400px;text-align:right;top:495.34px;font-size:12px;line-height:12px;font-weight:700;color:#2a2a2a;letter-spacing:0px;">242</span>
</body></html>
